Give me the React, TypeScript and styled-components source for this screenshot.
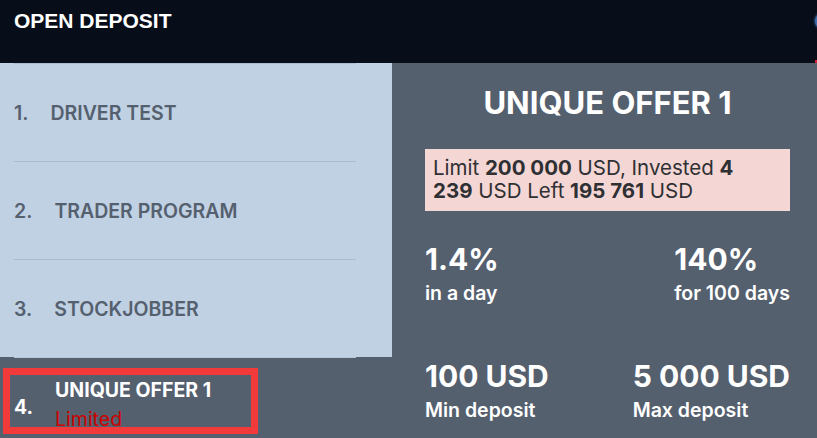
import React from 'react'
import styled, { createGlobalStyle } from 'styled-components'

interface Program {
  num: string
  title: string
}

interface Stat {
  value: string
  label: string
}

const programs: Program[] = [
  { num: '1.', title: 'DRIVER TEST' },
  { num: '2.', title: 'TRADER PROGRAM' },
  { num: '3.', title: 'STOCKJOBBER' },
]

const statRows: Stat[][] = [
  [
    { value: '1.4%', label: 'in a day' },
    { value: '140%', label: 'for 100 days' },
  ],
  [
    { value: '100 USD', label: 'Min deposit' },
    { value: '5 000 USD', label: 'Max deposit' },
  ],
]

const App = () => {
  return (
    <>
      <GlobalStyle />
      <Page>
        <Header>
          <HeaderTitle>OPEN DEPOSIT</HeaderTitle>
          <CloseDot />
          <EdgeMark />
        </Header>
        <Main>
          <Sidebar>
            <List>
              {programs.map(({ num, title }) => (
                <Item key={num}>
                  <Num>{num}</Num>
                  <ItemTitle>{title}</ItemTitle>
                </Item>
              ))}
            </List>
            <ActiveItem>
              <Num $active>4.</Num>
              <ActiveText>
                <ItemTitle $active>UNIQUE OFFER 1</ItemTitle>
                <Limited>Limited</Limited>
              </ActiveText>
              <Highlight />
            </ActiveItem>
          </Sidebar>
          <Offer>
            <OfferTitle>UNIQUE OFFER 1</OfferTitle>
            <LimitBox>
              Limit <b>200 000</b> USD, Invested <b>4</b>
              <br />
              <b>239</b> USD Left <b>195 761</b> USD
            </LimitBox>
            <Stats>
              {statRows.map((row, i) => (
                <StatRow key={i}>
                  {row.map(({ value, label }) => (
                    <StatBlock key={label}>
                      <StatValue>{value}</StatValue>
                      <StatLabel>{label}</StatLabel>
                    </StatBlock>
                  ))}
                </StatRow>
              ))}
            </Stats>
          </Offer>
        </Main>
      </Page>
    </>
  )
}

export default App

// Styles
const GlobalStyle = createGlobalStyle`
  html, body {
    margin: 0;
    padding: 0;
    background: #55606f;
    overflow: hidden;
  }
  * {
    box-sizing: border-box;
  }
`

const Page = styled.div`
  width: 817px;
  height: 438px;
  overflow: hidden;
  font-family: Inter, 'Noto Sans', sans-serif;
  background: #55606f;
`

const Header = styled.header`
  position: relative;
  height: 63px;
  background: #080e19;
  padding: 9px 14px 0;
`

const HeaderTitle = styled.h1`
  margin: 0;
  font-family: 'Liberation Sans', Arial, sans-serif;
  font-weight: 700;
  font-size: 21px;
  line-height: 24px;
  color: #ffffff;
`

const CloseDot = styled.span`
  position: absolute;
  top: 13px;
  right: -14px;
  width: 16px;
  height: 16px;
  border-radius: 50%;
  background: #3f6fae;
  box-shadow: 0 0 3px #4e86d0;
`

const EdgeMark = styled.span`
  position: absolute;
  bottom: 0;
  right: 0;
  width: 2px;
  height: 3px;
  background: #d81e3a;
`

const Main = styled.div`
  display: flex;
  height: 375px;
`

const Sidebar = styled.aside`
  width: 392px;
  flex-shrink: 0;
`

const List = styled.div`
  background: #c0d1e3;
`

const Item = styled.div`
  display: flex;
  align-items: center;
  height: 98px;
  margin: 0 36px 0 14px;
  border-top: 1px solid #a9bbcf;
`

const Num = styled.span<{ $active?: boolean }>`
  font-size: 19.5px;
  font-weight: ${({ $active }) => ($active ? 700 : 600)};
  color: ${({ $active }) => ($active ? '#ffffff' : '#55606f')};
  margin-right: 22px;
`

const ItemTitle = styled.span<{ $active?: boolean }>`
  font-size: 19.5px;
  line-height: 24px;
  font-weight: ${({ $active }) => ($active ? 700 : 600)};
  color: ${({ $active }) => ($active ? '#ffffff' : '#55606f')};
`

const ActiveItem = styled(Item)`
  position: relative;
  border-top-color: #b5c6d9;
`

const ActiveText = styled.div`
  display: flex;
  flex-direction: column;
  gap: 5px;
  margin-top: -4px;
`

const Limited = styled.span`
  font-size: 19.5px;
  line-height: 24px;
  color: #cc0000;
`

const Highlight = styled.span`
  position: absolute;
  left: -11px;
  top: 10px;
  width: 255px;
  height: 66px;
  border: 7px solid #f33a3a;
`

const Offer = styled.section`
  flex: 1;
  padding: 22px 27px 0 33px;
  color: #ffffff;
`

const OfferTitle = styled.h2`
  margin: 0;
  text-align: center;
  font-size: 31px;
  font-weight: 700;
  line-height: 36px;
`

const LimitBox = styled.div`
  margin-top: 28px;
  padding: 7px 8px 9px;
  background: #f4d6d4;
  color: #2f3033;
  font-size: 20.5px;
  line-height: 23px;

  b {
    font-weight: 700;
  }
`

const Stats = styled.div`
  display: flex;
  flex-direction: column;
  gap: 54px;
  margin-top: 31px;
`

const StatRow = styled.div`
  display: flex;
  justify-content: space-between;
`

const StatBlock = styled.div`
  display: flex;
  flex-direction: column;
  gap: 5px;
`

const StatValue = styled.span`
  font-size: 30px;
  font-weight: 700;
  line-height: 34px;
`

const StatLabel = styled.span`
  font-size: 19.5px;
  font-weight: 600;
  line-height: 24px;
`
